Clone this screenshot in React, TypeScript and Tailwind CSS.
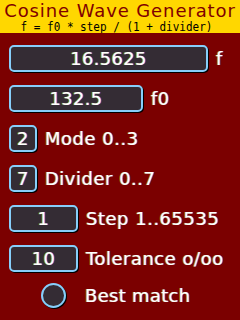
import React from 'react'

interface FieldRowProps {
  value: string
  label: string
  boxWidth: string
}

const fringe = '[text-shadow:-1px_0_0_rgba(255,255,0,0.55),1px_0_0_rgba(70,70,255,0.65)]'

function FieldRow({ value, label, boxWidth }: FieldRowProps) {
  return (
    <div className="flex items-center h-[27px] gap-[8px]">
      <div
        className={`${boxWidth} h-[27px] rounded-[5px] border-2 border-[#87cefa] bg-[#342c34] shadow-[1px_1px_0_#000] flex items-center justify-center text-white text-[18px] leading-none tracking-[0.3px] ${fringe}`}
      >
        {value}
      </div>
      <span className={`text-white text-[18px] leading-none tracking-[0.5px] ${fringe}`}>{label}</span>
    </div>
  )
}

export default function App() {
  return (
    <div className="w-[240px] h-[320px] bg-[#7b0000] overflow-hidden font-[family-name:'DejaVu_Sans',sans-serif]">
      {/* ヘッダー */}
      <div className="h-[33px] bg-[#ffd700] flex flex-col items-center overflow-hidden">
        <div className="text-[#800000] text-[18px] leading-[20px] mt-[1px] tracking-[0.9px]">Cosine Wave Generator</div>
        <div className="text-black text-[13px] leading-[12px] font-[family-name:'DejaVu_Sans_Mono',monospace] ml-[-8px] whitespace-pre scale-x-[0.845]">
          f = f0 * step / (1 + divider)
        </div>
      </div>

      {/* 入力欄 */}
      <div className="flex flex-col gap-[13px] pl-[9px] pt-[12px]">
        <FieldRow value="16.5625" label="f" boxWidth="w-[199px]" />
        <FieldRow value="132.5" label="f0" boxWidth="w-[134px]" />
        <FieldRow value="2" label="Mode 0..3" boxWidth="w-[28px]" />
        <FieldRow value="7" label="Divider 0..7" boxWidth="w-[28px]" />
        <FieldRow value="1" label="Step 1..65535" boxWidth="w-[69px]" />
        <FieldRow value="10" label="Tolerance o/oo" boxWidth="w-[69px]" />

        {/* ベストマッチ */}
        <div className="flex items-center h-[25px] mt-[-2px]">
          <div className="ml-[32px] w-[25px] h-[25px] rounded-full border-2 border-[#87cefa] bg-[#342c34] shadow-[1px_1px_0_#000]" />
          <span className={`ml-[19px] text-white text-[18px] leading-none tracking-[0.3px] ${fringe}`}>Best match</span>
        </div>
      </div>
    </div>
  )
}
